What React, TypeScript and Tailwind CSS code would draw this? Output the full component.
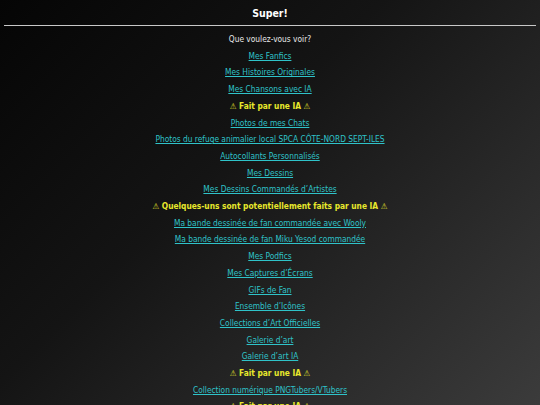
const items: { text: string; warn?: boolean }[] = [
  { text: 'Mes Fanfics' },
  { text: 'Mes Histoires Originales' },
  { text: 'Mes Chansons avec IA' },
  { text: '⚠ Fait par une IA ⚠', warn: true },
  { text: 'Photos de mes Chats' },
  { text: 'Photos du refuge animalier local SPCA CÔTE-NORD SEPT-ILES' },
  { text: 'Autocollants Personnalisés' },
  { text: 'Mes Dessins' },
  { text: 'Mes Dessins Commandés d’Artistes' },
  { text: '⚠ Quelques-uns sont potentiellement faits par une IA ⚠', warn: true },
  { text: 'Ma bande dessinée de fan commandée avec Wooly' },
  { text: 'Ma bande dessinée de fan Miku Yesod commandée' },
  { text: 'Mes Podfics' },
  { text: 'Mes Captures d’Écrans' },
  { text: 'GIFs de Fan' },
  { text: 'Ensemble d’Icônes' },
  { text: 'Collections d’Art Officielles' },
  { text: 'Galerie d’art' },
  { text: 'Galerie d’art IA' },
  { text: '⚠ Fait par une IA ⚠', warn: true },
  { text: 'Collection numérique PNGTubers/VTubers' },
  { text: '⚠ Fait par une IA ⚠', warn: true },
];

export default function App() {
  return (
    <div
      className="min-h-[405px] w-full bg-[linear-gradient(135deg,#050505_0%,#141414_40%,#3c3c3c_100%)] text-center"
      style={{ fontFamily: '"DejaVu Sans Condensed", "DejaVu Sans", Verdana, sans-serif', fontStretch: 'condensed' }}
    >
      <h1 className="pt-[5px] text-[10.5px] font-bold leading-[16px] text-white">Super!</h1>
      <hr className="mx-1 mt-[4px] border-t border-[#c8c8c8]" />
      <p className="mt-[5px] text-[8.3px] leading-[16.7px] text-[#e8e8e8]">Que voulez-vous voir?</p>
      <ul className="text-[8.3px] leading-[16.7px]">
        {items.map((item, i) => (
          <li key={i}>
            {item.warn ? (
              <span className="font-bold text-[#e8e82c]">{item.text}</span>
            ) : (
              <a href="#" className="text-[#2fc3c9] underline">
                {item.text}
              </a>
            )}
          </li>
        ))}
      </ul>
    </div>
  );
}
